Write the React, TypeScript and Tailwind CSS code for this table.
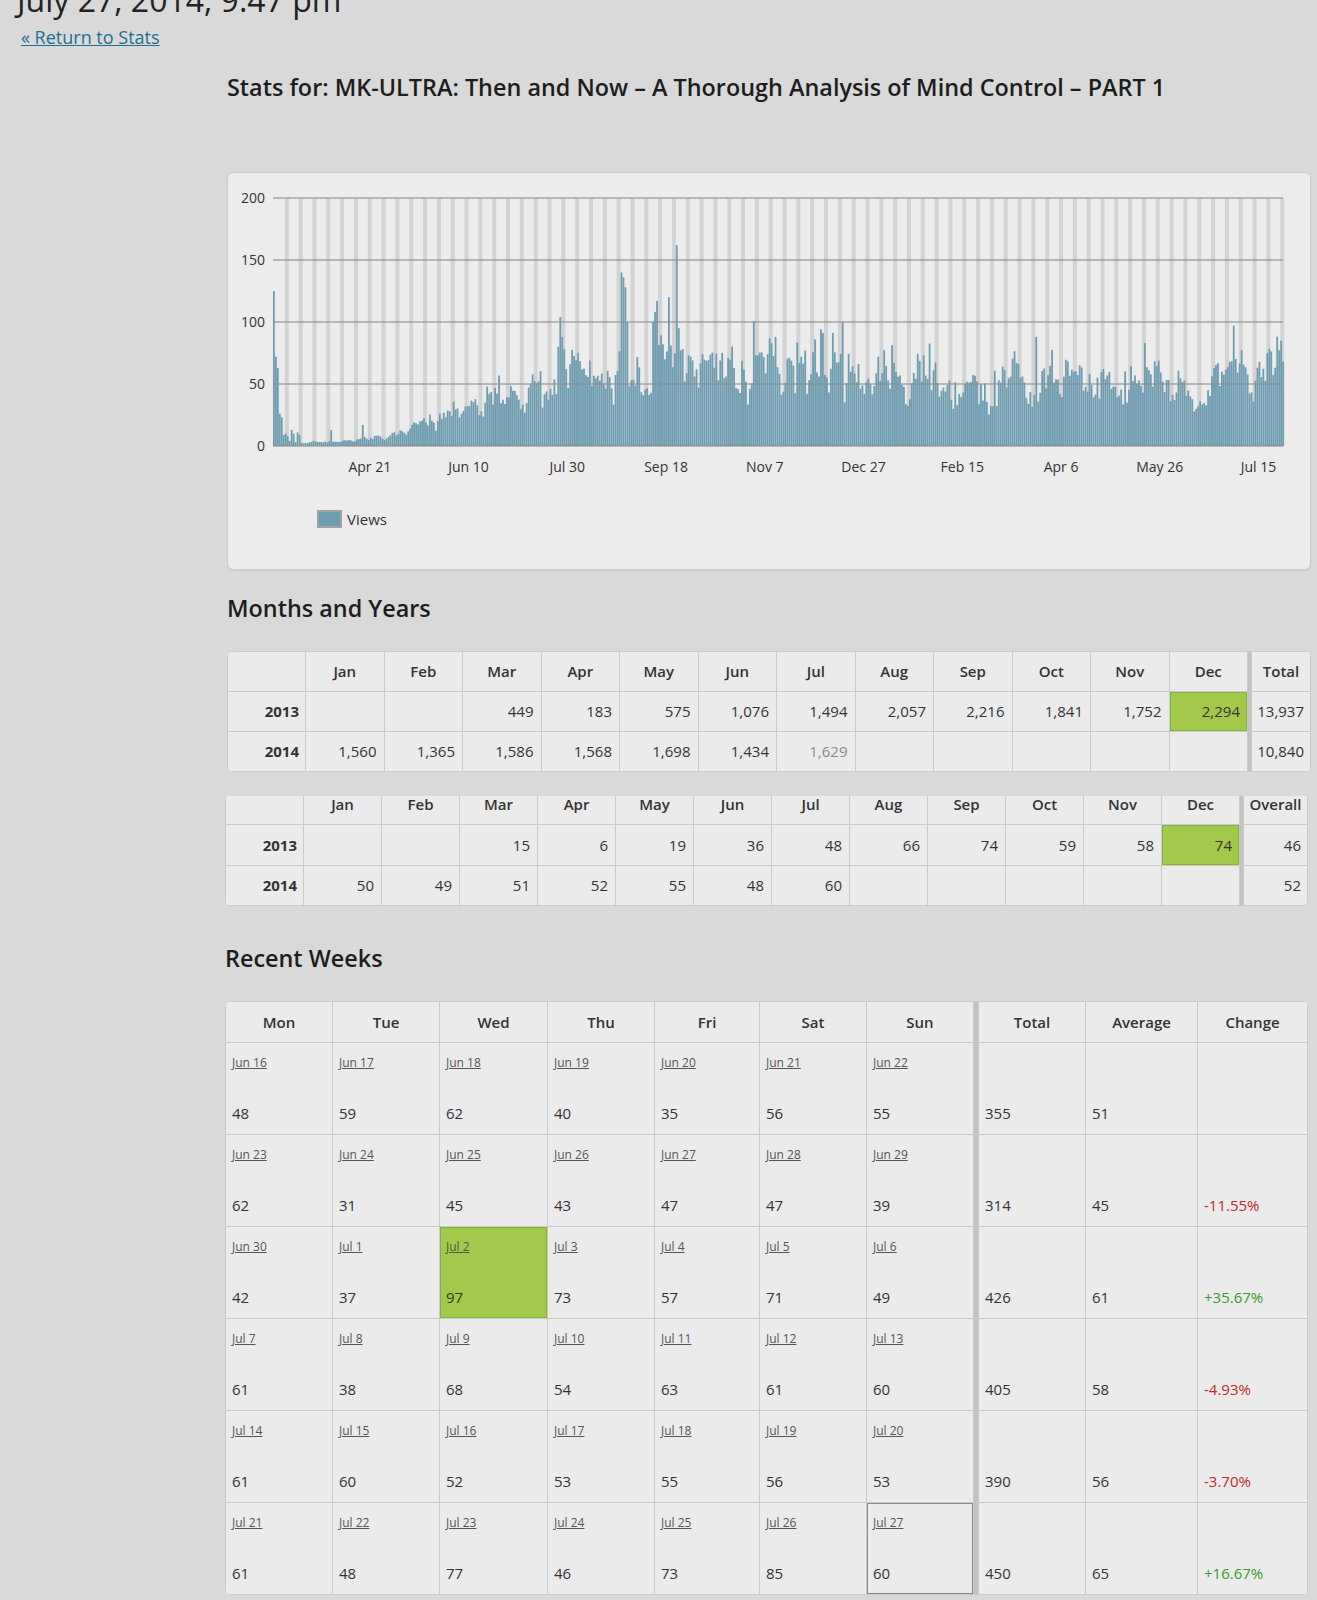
import React from 'react';

function mulberry32(a: number) {
  return function () {
    let t = (a += 0x6d2b79f5);
    t = Math.imul(t ^ (t >>> 15), t | 1);
    t ^= t + Math.imul(t ^ (t >>> 7), t | 61);
    return ((t ^ (t >>> 14)) >>> 0) / 4294967296;
  };
}

const KEYS: [number, number][] = [
  [0, 4], [14, 3], [40, 4], [46, 7], [60, 10], [70, 13], [80, 22], [90, 30], [100, 33],
  [115, 38], [135, 42], [143, 48], [150, 55], [160, 50], [170, 62], [180, 68], [190, 60],
  [198, 72], [206, 75], [215, 68], [230, 62], [250, 62], [270, 60], [285, 72], [295, 62],
  [310, 55], [330, 50], [345, 45], [360, 48], [380, 52], [400, 55], [420, 52], [440, 58],
  [455, 50], [462, 40], [468, 32], [475, 45], [485, 60], [495, 58], [505, 62], [511, 65],
];

function baseAt(d: number) {
  for (let i = 0; i < KEYS.length - 1; i++) {
    const [d0, v0] = KEYS[i];
    const [d1, v1] = KEYS[i + 1];
    if (d >= d0 && d <= d1) return v0 + ((v1 - v0) * (d - d0)) / (d1 - d0);
  }
  return KEYS[KEYS.length - 1][1];
}

const OVERRIDES: Record<number, number> = {
  0: 125, 1: 72, 2: 63, 3: 26, 4: 23, 5: 9, 6: 10, 7: 8, 8: 4, 9: 13, 10: 10, 11: 3, 12: 11, 13: 9,
  29: 13, 45: 17, 144: 80, 145: 104, 146: 88, 147: 78, 148: 62, 176: 140, 177: 136, 178: 128,
  179: 100, 192: 100, 193: 108, 194: 117, 200: 120, 204: 162, 205: 95, 278: 91, 288: 100,
  386: 88, 441: 83, 486: 97, 510: 85, 511: 68, 344: 30, 364: 32, 432: 35, 466: 28, 467: 30, 468: 32,
};

function genData() {
  const rnd = mulberry32(98765);
  const out: number[] = [];
  let walk = 0;
  for (let d = 0; d < 512; d++) {
    const b = baseAt(d);
    walk = 0.6 * walk + (rnd() - 0.5) * 0.45;
    let v = b * (1 + walk + (rnd() - 0.5) * 0.3);
    const r = rnd();
    if (r < 0.03) v *= 1.3;
    else if (r > 0.97) v *= 0.7;
    if (OVERRIDES[d] !== undefined) v = OVERRIDES[d];
    out.push(Math.max(0.6, v));
  }
  return out;
}

const DATA = genData();

const PL = 45;
const PT = 25;
const PB = 273;
const PR = 1055;
const DX = 1.975;
const YS = 1.24;

const XLABELS: [number, string][] = [
  [49, 'Apr 21'], [99, 'Jun 10'], [149, 'Jul 30'], [199, 'Sep 18'], [249, 'Nov 7'],
  [299, 'Dec 27'], [349, 'Feb 15'], [399, 'Apr 6'], [449, 'May 26'], [499, 'Jul 15'],
];

function Chart() {
  const stripes = [];
  for (let k = 1; k <= 73; k++) {
    const x = PL + 7 * k * DX;
    stripes.push(<rect key={k} x={x - 2} y={PT} width={4} height={PB - PT} fill="#d3d3d3" />);
  }
  return (
    <svg width={1082} height={396} className="block">
      {stripes}
      {DATA.map((v, d) => (
        <rect key={d} x={PL + d * DX} y={PB - v * YS} width={1.8} height={v * YS} fill="#6e9db2" />
      ))}
      {[200, 150, 100, 50, 0].map((t) => (
        <line key={t} x1={PL} x2={PR} y1={PB - t * YS} y2={PB - t * YS} stroke="#8e8e8e" strokeOpacity={0.75} strokeWidth={1.3} />
      ))}
      {[200, 150, 100, 50, 0].map((t) => (
        <text key={t} x={37} y={PB - t * YS + 5} textAnchor="end" fontFamily="'Open Sans', sans-serif" fontSize={14} fill="#333">
          {t}
        </text>
      ))}
      {XLABELS.map(([d, l]) => (
        <text key={l} x={PL + d * DX} y={299} textAnchor="middle" fontFamily="'Open Sans', sans-serif" fontSize={14} fill="#333">
          {l}
        </text>
      ))}
      <rect x={90} y={338} width={23} height={16} fill="#6e9db2" stroke="#a3a3a3" strokeWidth={2} />
      <text x={119} y={352} fontFamily="'Open Sans', sans-serif" fontSize={15} fill="#333">
        Views
      </text>
    </svg>
  );
}

const MONTHS = ['Jan', 'Feb', 'Mar', 'Apr', 'May', 'Jun', 'Jul', 'Aug', 'Sep', 'Oct', 'Nov', 'Dec'];

type MRow = { year: string; vals: string[]; last: string };

const VIEWS: MRow[] = [
  { year: '2013', vals: ['', '', '449', '183', '575', '1,076', '1,494', '2,057', '2,216', '1,841', '1,752', '2,294'], last: '13,937' },
  { year: '2014', vals: ['1,560', '1,365', '1,586', '1,568', '1,698', '1,434', '1,629', '', '', '', '', ''], last: '10,840' },
];
const AVGS: MRow[] = [
  { year: '2013', vals: ['', '', '15', '6', '19', '36', '48', '66', '74', '59', '58', '74'], last: '46' },
  { year: '2014', vals: ['50', '49', '51', '52', '55', '48', '60', '', '', '', '', ''], last: '52' },
];

const headCell = 'flex items-center justify-center bg-[#ebebeb] text-[15px] font-semibold text-[#333]';
const yearCell = 'flex items-center justify-end pr-[6px] bg-[#ebebeb] text-[15px] font-bold text-[#333]';
const valCell = 'flex items-center justify-end pr-[7px] bg-[#ebebeb] text-[15px] text-[#333]';
const greenCell = 'flex items-center justify-end pr-[7px] bg-[#a2c94a] shadow-[inset_0_0_0_1px_#86b238] text-[15px] text-[#333]';
const grayCell = 'flex items-center justify-end pr-[7px] bg-[#ebebeb] text-[15px] text-[#8c8c8c]';
const sepCell = 'bg-[#c2c2c2]';

function MonthCells({ rows, lastLabel }: { rows: MRow[]; lastLabel: string }) {
  return (
    <>
      <div className={headCell} />
      {MONTHS.map((m) => (
        <div key={m} className={headCell}>{m}</div>
      ))}
      <div className={sepCell} />
      <div className={headCell}>{lastLabel}</div>
      {rows.map((r) => (
        <React.Fragment key={r.year}>
          <div className={yearCell}>{r.year}</div>
          {r.vals.map((v, i) => {
            let cls = valCell;
            if (r.year === '2013' && i === 11) cls = greenCell;
            if (r.year === '2014' && i === 6 && lastLabel === 'Total') cls = grayCell;
            return (
              <div key={i} className={cls}>{v}</div>
            );
          })}
          <div className={sepCell} />
          <div className="flex items-center justify-end pr-[6px] bg-[#ebebeb] text-[15px] text-[#333]">{r.last}</div>
        </React.Fragment>
      ))}
    </>
  );
}

type Week = { dates: string[]; vals: number[]; total: number; avg: number; change: string };

const WEEKS: Week[] = [
  { dates: ['Jun 16', 'Jun 17', 'Jun 18', 'Jun 19', 'Jun 20', 'Jun 21', 'Jun 22'], vals: [48, 59, 62, 40, 35, 56, 55], total: 355, avg: 51, change: '' },
  { dates: ['Jun 23', 'Jun 24', 'Jun 25', 'Jun 26', 'Jun 27', 'Jun 28', 'Jun 29'], vals: [62, 31, 45, 43, 47, 47, 39], total: 314, avg: 45, change: '-11.55%' },
  { dates: ['Jun 30', 'Jul 1', 'Jul 2', 'Jul 3', 'Jul 4', 'Jul 5', 'Jul 6'], vals: [42, 37, 97, 73, 57, 71, 49], total: 426, avg: 61, change: '+35.67%' },
  { dates: ['Jul 7', 'Jul 8', 'Jul 9', 'Jul 10', 'Jul 11', 'Jul 12', 'Jul 13'], vals: [61, 38, 68, 54, 63, 61, 60], total: 405, avg: 58, change: '-4.93%' },
  { dates: ['Jul 14', 'Jul 15', 'Jul 16', 'Jul 17', 'Jul 18', 'Jul 19', 'Jul 20'], vals: [61, 60, 52, 53, 55, 56, 53], total: 390, avg: 56, change: '-3.70%' },
  { dates: ['Jul 21', 'Jul 22', 'Jul 23', 'Jul 24', 'Jul 25', 'Jul 26', 'Jul 27'], vals: [61, 48, 77, 46, 73, 85, 60], total: 450, avg: 65, change: '+16.67%' },
];

const DAYS = ['Mon', 'Tue', 'Wed', 'Thu', 'Fri', 'Sat', 'Sun'];

function WeeksTable() {
  return (
    <div className="grid grid-cols-[106px_106px_107px_106px_104px_106px_106px_4px_106px_111px_1fr] grid-rows-[40px_repeat(6,91px)] gap-px bg-[#cacaca] p-px rounded-[7px] overflow-hidden w-[1083px]">
      {DAYS.map((d) => (
        <div key={d} className={headCell}>{d}</div>
      ))}
      <div className={sepCell} />
      <div className={headCell}>Total</div>
      <div className={headCell}>Average</div>
      <div className={headCell}>Change</div>
      {WEEKS.map((w, wi) => (
        <React.Fragment key={wi}>
          {w.vals.map((v, i) => {
            const green = wi === 2 && i === 2;
            const today = wi === 5 && i === 6;
            const cls = green
              ? 'flex flex-col pl-[6px] pt-[12px] bg-[#a2c94a] shadow-[inset_0_0_0_1px_#86b238]'
              : today
              ? 'flex flex-col pl-[6px] pt-[12px] bg-[#ebebeb] shadow-[inset_0_0_0_1px_#8a8a8a]'
              : 'flex flex-col pl-[6px] pt-[12px] bg-[#ebebeb]';
            return (
              <div key={i} className={cls}>
                <a href="#" className="text-[12px] leading-[16px] text-[#555] underline">{w.dates[i]}</a>
                <div className="mt-[32px] text-[15px] leading-[20px] text-[#333]">{v}</div>
              </div>
            );
          })}
          <div className={sepCell} />
          <div className="pl-[6px] pt-[60px] bg-[#ebebeb] text-[15px] leading-[20px] text-[#333]">{w.total}</div>
          <div className="pl-[6px] pt-[60px] bg-[#ebebeb] text-[15px] leading-[20px] text-[#333]">{w.avg}</div>
          <div
            className={
              w.change.startsWith('-')
                ? 'pl-[6px] pt-[60px] bg-[#ebebeb] text-[15px] leading-[20px] text-[#bd2a2e]'
                : 'pl-[6px] pt-[60px] bg-[#ebebeb] text-[15px] leading-[20px] text-[#3a9a2a]'
            }
          >
            {w.change}
          </div>
        </React.Fragment>
      ))}
    </div>
  );
}

export default function App() {
  return (
    <div className="flex flex-col min-h-[1600px] bg-[#d9d9d9] font-['Open_Sans',sans-serif] text-[#222]">
      <h2 className="-mt-[20px] pl-[17px] text-[32px] leading-[40px] font-normal text-[#222]">July 27, 2014, 9:47 pm</h2>
      <div className="mt-[5px] pl-[21px] text-[18px] leading-[24px]">
        <a href="#" className="text-[#1e6f95] underline">« Return to Stats</a>
      </div>
      <div className="ml-[227px] w-[1084px] flex flex-col">
        <h1 className="mt-[23px] text-[23.4px] leading-[30px] font-semibold text-[#1d1d1d]">
          Stats for: MK-ULTRA: Then and Now – A Thorough Analysis of Mind Control – PART 1
        </h1>
        <div className="mt-[70px] w-[1084px] h-[398px] rounded-[6px] border border-[#cdcdcd] bg-[#ececec] shadow-[0_1px_2px_rgba(0,0,0,0.06)]">
          <Chart />
        </div>
        <h3 className="mt-[23px] text-[23.4px] leading-[30px] font-semibold text-[#1d1d1d]">Months and Years</h3>
        <div className="mt-[28px] grid grid-cols-[77px_repeat(12,77.5px)_3px_1fr] auto-rows-[39px] gap-px bg-[#cacaca] p-px rounded-[7px] overflow-hidden w-[1084px]">
          <MonthCells rows={VIEWS} lastLabel="Total" />
        </div>
        <div className="mt-[24px] -ml-[2px] w-[1083px] h-[110px] overflow-hidden rounded-b-[7px]">
          <div className="-mt-[12px] grid grid-cols-[77px_repeat(12,77px)_3px_1fr] grid-rows-[39px_40px_39px] gap-px bg-[#cacaca] p-px w-[1083px]">
            <MonthCells rows={AVGS} lastLabel="Overall" />
          </div>
        </div>
        <h3 className="mt-[37px] -ml-[2px] text-[23.4px] leading-[30px] font-semibold text-[#1d1d1d]">Recent Weeks</h3>
        <div className="mt-[28px] -ml-[2px]">
          <WeeksTable />
        </div>
      </div>
    </div>
  );
}
